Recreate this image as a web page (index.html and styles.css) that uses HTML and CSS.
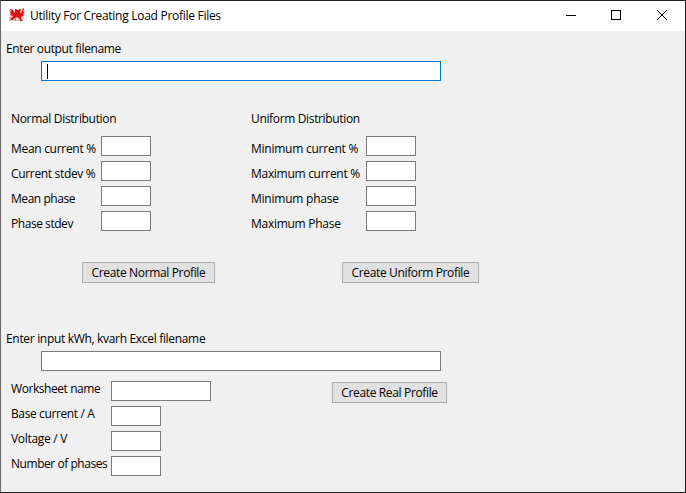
FILE: index.html
```
<!DOCTYPE html>
<html lang="en">
<head>
<meta charset="utf-8">
<title>Utility For Creating Load Profile Files</title>
<link rel="stylesheet" href="styles.css">
</head>
<body>
<div class="window">
  <header class="titlebar">
    <svg class="logo" width="16" height="14" viewBox="0 0 16 14">
      <path fill="#f3a5a5" d="M0 2l2-1 3 1 2-1 5 1 2-2 1 1 1 3-2 8 1 1H0V9l1-3z" opacity=".6"/>
      <path fill="#e20d0d" d="M1 1l3 1 1 3 1-1V1l3 1 3-1-1 3 1 2 1-3 1-3 1 1-1 2 1 1-1 4-2 1v2l2 2h-3l-1-3-2-1-2 1v2l1 1H6l1-2-2-1-1 2H1l1-1-1-2 2 1 1-2-3-1V6l2 1-2-3 1-1z"/>
    </svg>
    <h1 class="title"><span class="t-title">Utility For Creating Load Profile Files</span></h1>
    <svg class="controls" width="138" height="30" viewBox="0 0 138 30" fill="none" stroke="#000" shape-rendering="crispEdges">
      <path d="M19 14.500h10"/>
      <rect x="64.500" y="9.500" width="9" height="9"/>
      <path shape-rendering="auto" d="M110 9l10 10M120 9l-10 10"/>
    </svg>
  </header>
  <main class="content">
    <label class="file-label t-output">Enter output filename</label>
    <div class="field wide focused"><span class="caret"></span></div>
    <div class="distributions">
      <section class="group normal">
        <h2><span class="t-normal">Normal Distribution</span></h2>
        <div class="row"><label class="t-meanc">Mean current %</label><div class="field"></div></div>
        <div class="row"><label class="t-stdc">Current stdev %</label><div class="field"></div></div>
        <div class="row"><label class="t-meanp">Mean phase</label><div class="field"></div></div>
        <div class="row"><label class="t-stdp">Phase stdev</label><div class="field"></div></div>
        <button><span class="t-bn">Create Normal Profile</span></button>
      </section>
      <section class="group uniform">
        <h2><span class="t-uniform">Uniform Distribution</span></h2>
        <div class="row"><label class="t-minc">Minimum current %</label><div class="field"></div></div>
        <div class="row"><label class="t-maxc">Maximum current %</label><div class="field"></div></div>
        <div class="row"><label class="t-minp">Minimum phase</label><div class="field"></div></div>
        <div class="row"><label class="t-maxp">Maximum Phase</label><div class="field"></div></div>
        <button><span class="t-bu">Create Uniform Profile</span></button>
      </section>
    </div>
    <label class="file-label t-input">Enter input kWh, kvarh Excel filename</label>
    <div class="field wide"></div>
    <div class="real">
      <section class="group source">
        <div class="row"><label class="t-ws">Worksheet name</label><div class="field medium"></div></div>
        <div class="row"><label class="t-base">Base current / A</label><div class="field"></div></div>
        <div class="row"><label class="t-volt">Voltage / V</label><div class="field"></div></div>
        <div class="row"><label class="t-num">Number of phases</label><div class="field"></div></div>
      </section>
      <button><span class="t-br">Create Real Profile</span></button>
    </div>
  </main>
</div>
</body>
</html>
```
FILE: styles.css
```
* { box-sizing: border-box; }
body { margin: 0; background: #f0f0f0; }
.window {
  width: 686px;
  height: 493px;
  border: 1px solid #202020;
  border-left-color: #686868;
  background: #f0f0f0;
  color: #000;
  font: 12px/16px "Open Sans", "Noto Sans", sans-serif;
  overflow: hidden;
}
.titlebar { display: flex; height: 30px; background: #fff; }
.logo { margin: 7px 5px 0 8px; }
.title { flex: 1; margin: 0; padding-top: 7px; font-size: 12px; font-weight: 400; white-space: nowrap; }
.controls { flex: none; }
.content { padding-top: 10px; }
.file-label { display: block; width: max-content; height: 20px; margin-left: 5px; white-space: nowrap; }
.field { flex: none; width: 50px; height: 20px; border: 1px solid #7a7a7a; background: #fff; }
.wide { width: 400px; margin-left: 40px; }
.medium { width: 100px; }
.focused { border-color: #0078d7; padding: 2px 0 0 5px; }
.caret { display: block; width: 1px; height: 15px; background: #000; }
.distributions { display: flex; height: 250px; padding: 30px 0 0 10px; }
.group h2 { height: 25px; margin: 0; font-size: 12px; font-weight: 400; }
.row { display: flex; height: 25px; white-space: nowrap; }
.row label { flex: none; padding-top: 5px; }
.row .field { margin-left: auto; }
.normal { width: 240px; }
.normal .row { width: 140px; }
.uniform .row { width: 165px; }
button {
  display: block;
  height: 21px;
  padding: 0;
  border: 1px solid #adadad;
  background: #e1e1e1;
  color: #000;
  font: inherit;
  line-height: 19px;
  text-align: center;
  white-space: nowrap;
}
.normal button { width: 133px; margin: 26px 0 0 71px; }
.uniform button { width: 137px; margin: 26px 0 0 91px; }
.real { display: flex; padding: 10px 0 0 10px; }
.source { width: 321px; }
.source .row { display: grid; grid-template-columns: 100px auto; justify-content: start; }
.source .row label { padding-top: 0; }
.source .row .field { margin-left: 0; }
.real button { width: 115px; margin-top: 1px; }

.t-title { letter-spacing: -.28px; }
.t-output { letter-spacing: -.37px; }
.t-normal { letter-spacing: -.32px; }
.t-meanc { letter-spacing: -.3px; }
.t-stdc { letter-spacing: -.33px; }
.t-meanp { letter-spacing: -.45px; }
.t-stdp { letter-spacing: -.45px; }
.t-uniform { letter-spacing: -.35px; }
.t-minc { letter-spacing: -.24px; }
.t-maxc { letter-spacing: -.29px; }
.t-minp { letter-spacing: -.23px; }
.t-maxp { letter-spacing: -.27px; }
.t-bn { letter-spacing: -.35px; }
.t-bu { letter-spacing: -.36px; }
.t-input { letter-spacing: -.32px; }
.t-ws { letter-spacing: -.43px; }
.t-base { letter-spacing: -.38px; }
.t-volt { letter-spacing: -.3px; }
.t-num { letter-spacing: -.45px; }
.t-br { letter-spacing: -.35px; }
```
